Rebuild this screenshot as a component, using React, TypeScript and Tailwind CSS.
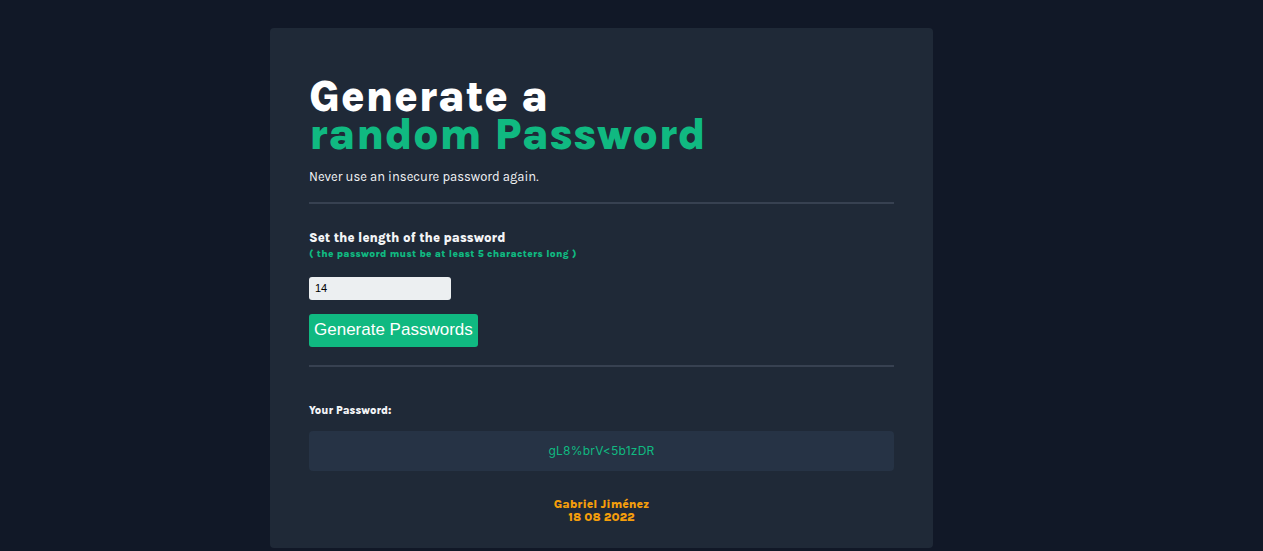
import { useState } from 'react';

const chars = 'ABCDEFGHIJKLMNOPQRSTUVWXYZabcdefghijklmnopqrstuvwxyz0123456789%<>!?#$&*';

export default function App() {
  const [length, setLength] = useState('14');
  const [password, setPassword] = useState('gL8%brV<5b1zDR');

  const generate = () => {
    const n = Math.max(5, parseInt(length) || 5);
    let out = '';
    for (let i = 0; i < n; i++) out += chars[Math.floor(Math.random() * chars.length)];
    setPassword(out);
  };

  return (
    <div className="min-h-screen bg-[#111827] pt-[28px] pl-[270px] font-['Karla','Inter',sans-serif]">
      <div className="w-[663px] h-[520px] bg-[#1f2937] rounded-[4px] px-[39px] pt-[50px]">
        {/* titulo */}
        <h1 className="text-[44px] font-extrabold leading-[38px] tracking-[0.01em] text-white">
          Generate a
          <br />
          <span className="text-[#10b981]">random Password</span>
        </h1>
        <p className="mt-[13px] text-[13px] text-[#f3f4f6]">Never use an insecure password again.</p>

        <div className="mt-[15px] h-[2px] bg-[#374151]" />

        <div className="pt-[26px]">
          <p className="text-[13px] font-extrabold leading-[16px] text-[#f3f4f6]">Set the length of the password</p>
          <p className="mt-[2px] text-[10px] font-extrabold leading-[12px] tracking-[0.03em] text-[#10b981]">
            ( the password must be at least 5 characters long )
          </p>
          <input
            type="number"
            value={length}
            onChange={(e) => setLength(e.target.value)}
            className="mt-[17px] block w-[142px] h-[23px] rounded-[3px] bg-[#eceff1] px-[6px] text-[11px] text-black font-['Liberation_Sans',sans-serif] outline-none"
          />
          <button
            onClick={generate}
            className="mt-[14px] h-[33px] px-[5px] rounded-[3px] bg-[#10b981] text-white text-[17px] font-['Liberation_Sans',Arial,sans-serif]"
          >
            Generate Passwords
          </button>
        </div>

        <div className="mt-[18px] h-[2px] bg-[#374151]" />

        <p className="mt-[36px] text-[11px] font-extrabold text-[#f3f4f6]">Your Password:</p>
        <div className="mt-[12px] h-[40px] rounded-[4px] bg-[#263345] flex items-center justify-center">
          <span className="text-[12px] tracking-[0.02em] text-[#10b981] font-['Inter',sans-serif]">{password}</span>
        </div>

        <div className="mt-[27px] text-center text-[12px] font-extrabold leading-[13px] text-[#f59e0b]">
          <p>Gabriel Jiménez</p>
          <p>18 08 2022</p>
        </div>
      </div>
    </div>
  );
}
